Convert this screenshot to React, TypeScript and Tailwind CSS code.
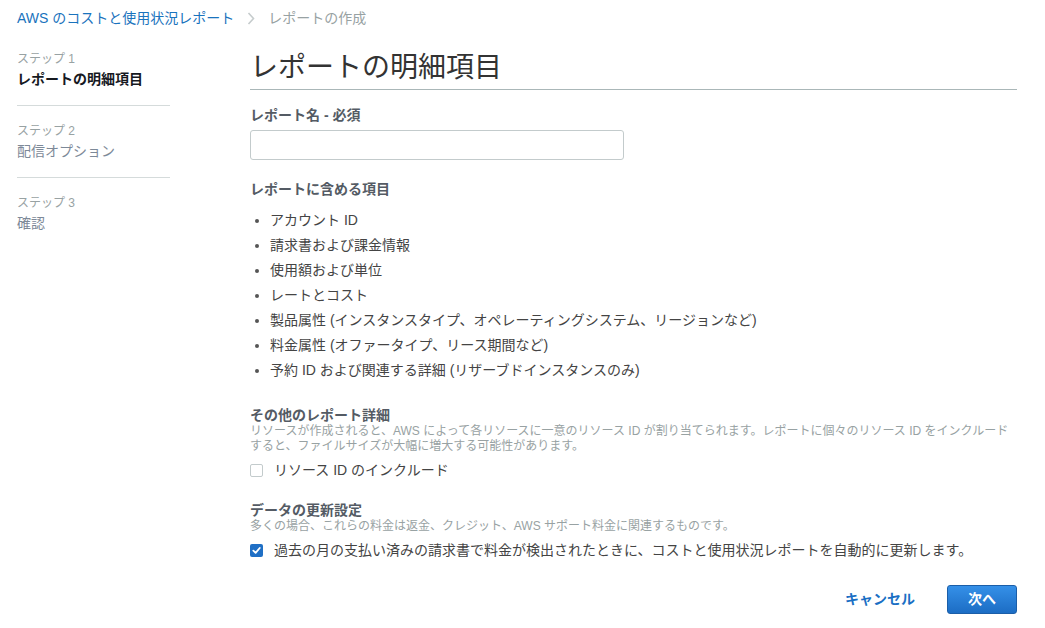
import React from 'react';

const steps = [
  { step: 'ステップ 1', title: 'レポートの明細項目', active: true },
  { step: 'ステップ 2', title: '配信オプション', active: false },
  { step: 'ステップ 3', title: '確認', active: false },
];

const items = [
  'アカウント ID',
  '請求書および課金情報',
  '使用額および単位',
  'レートとコスト',
  '製品属性 (インスタンスタイプ、オペレーティングシステム、リージョンなど)',
  '料金属性 (オファータイプ、リース期間など)',
  '予約 ID および関連する詳細 (リザーブドインスタンスのみ)',
];

function CheckBox({ checked }: { checked: boolean }) {
  if (checked) {
    return (
      <span className="w-[13px] h-[13px] rounded-[2px] bg-[#1f6fc5] flex items-center justify-center shrink-0">
        <svg width="9" height="9" viewBox="0 0 10 10" fill="none">
          <path d="M1.5 5.2 L4 7.6 L8.6 2.2" stroke="#fff" strokeWidth="2" strokeLinecap="round" strokeLinejoin="round" />
        </svg>
      </span>
    );
  }
  return <span className="w-[13px] h-[13px] rounded-[2px] border border-[#c3cbcc] bg-white shrink-0" />;
}

export default function App() {
  return (
    <div
      className="w-[1045px] h-[628px] bg-white overflow-hidden text-[#444]"
      style={{ fontFamily: '"Liberation Sans", "Noto Sans CJK JP", sans-serif' }}
    >
      {/* Breadcrumb */}
      <div className="h-[36px] flex items-center px-[17px] text-[14px]">
        <span className="text-[#1a73bd]">AWS のコストと使用状況レポート</span>
        <svg className="mx-[13px]" width="8" height="13" viewBox="0 0 8 13" fill="none">
          <path d="M1.5 1 L6.5 6.5 L1.5 12" stroke="#c6cccd" strokeWidth="1.6" />
        </svg>
        <span className="text-[#98a2a3]">レポートの作成</span>
      </div>

      <div className="flex pl-[17px] pr-[28px]">
        {/* Steps */}
        <div className="w-[153px] shrink-0 pt-[13px]">
          {steps.map((s, i) => (
            <div
              key={s.step}
              className={i < steps.length - 1 ? 'pb-[16px] mb-[15px] border-b border-[#d5dbdb]' : ''}
            >
              <div className="text-[12px] leading-[20px] text-[#98a2a3]">{s.step}</div>
              <div
                className={
                  s.active
                    ? 'text-[14px] leading-[20px] font-bold text-[#16191f]'
                    : 'text-[14px] leading-[20px] text-[#7d8998]'
                }
              >
                {s.title}
              </div>
            </div>
          ))}
        </div>

        {/* Main */}
        <div className="flex-1 ml-[80px]">
          <h1 className="mt-[12px] text-[28px] leading-[40px] font-normal text-[#333] pb-[1px] border-b border-[#aab7b8]">
            レポートの明細項目
          </h1>

          <div className="mt-[15px] text-[14px] leading-[20px] font-bold text-[#545b64]">レポート名 - 必須</div>
          <input
            className="mt-[5px] block w-[374px] h-[30px] rounded-[3px] border border-[#c3cbcc] px-2 outline-none"
            type="text"
          />

          <div className="mt-[19px] text-[14px] leading-[20px] font-bold text-[#545b64]">レポートに含める項目</div>
          <ul className="mt-[9px]">
            {items.map((t) => (
              <li key={t} className="flex items-center text-[14px] leading-[25px] text-[#444]">
                <span className="w-[4px] h-[4px] rounded-full bg-[#555] ml-[5px] mr-[11px]" />
                {t}
              </li>
            ))}
          </ul>

          <div className="mt-[23px] text-[14px] leading-[18px] font-bold text-[#545b64]">その他のレポート詳細</div>
          <div className="text-[12px] leading-[15px] text-[#98a2a3]">
            リソースが作成されると、AWS によって各リソースに一意のリソース ID が割り当てられます。レポートに個々のリソース ID をインクルード
            <br />
            すると、ファイルサイズが大幅に増大する可能性があります。
          </div>
          <label className="mt-[6px] flex items-center gap-[11px] text-[14px] leading-[20px] text-[#444]">
            <CheckBox checked={false} />
            リソース ID のインクルード
          </label>

          <div className="mt-[21px] text-[14px] leading-[18px] font-bold text-[#545b64]">データの更新設定</div>
          <div className="text-[12px] leading-[15px] text-[#98a2a3]">
            多くの場合、これらの料金は返金、クレジット、AWS サポート料金に関連するものです。
          </div>
          <label className="mt-[6px] flex items-center gap-[11px] text-[14px] leading-[20px] text-[#444]">
            <CheckBox checked={true} />
            過去の月の支払い済みの請求書で料金が検出されたときに、コストと使用状況レポートを自動的に更新します。
          </label>

          <div className="mt-[25px] flex items-center justify-end gap-[32px]">
            <button className="text-[14px] font-bold text-[#1a6fc4]">キャンセル</button>
            <button className="w-[70px] h-[29px] rounded-[3px] border border-[#1b5ea8] bg-gradient-to-b from-[#3590e8] to-[#1c6dc4] text-white text-[14px] font-bold">
              次へ
            </button>
          </div>
        </div>
      </div>
    </div>
  );
}
